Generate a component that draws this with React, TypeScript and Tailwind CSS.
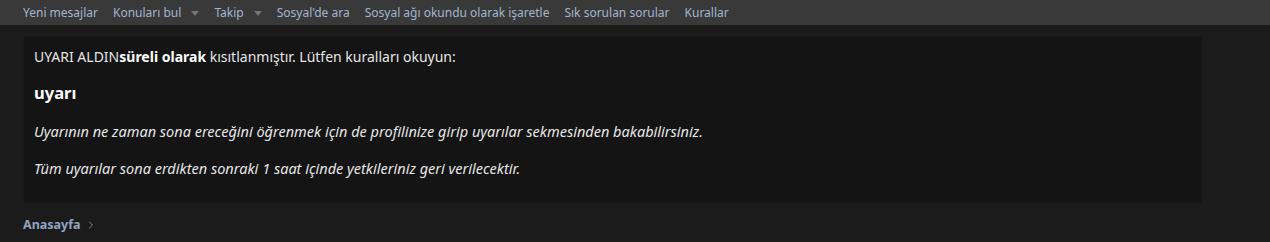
import { ChevronRight } from "lucide-react"

const navItems = [
  { label: "Yeni mesajlar" },
  { label: "Konuları bul", menu: true },
  { label: "Takip", menu: true },
  { label: "Sosyal'de ara" },
  { label: "Sosyal ağı okundu olarak işaretle" },
  { label: "Sık sorulan sorular" },
  { label: "Kurallar" },
]

function Caret() {
  return (
    <svg width="8" height="5" viewBox="0 0 8 5" className="ml-[10px] mt-[1px]">
      <path d="M0 0 H8 L4 5 Z" fill="#6f7680" />
    </svg>
  )
}

export default function App() {
  return (
    <div
      className="min-h-[242px] bg-[#1b1b1b] text-[#e6e6e6]"
      style={{ fontFamily: '"Noto Sans", "Open Sans", sans-serif' }}
    >
      {/* Sub navigation */}
      <nav className="h-[25px] bg-[#393939] flex items-center gap-[15px] px-[23px]">
        {navItems.map((item) => (
          <a
            key={item.label}
            href="#"
            className="flex items-center text-[12px] text-[#a3b5cf] leading-none"
          >
            {item.label}
            {item.menu && <Caret />}
          </a>
        ))}
      </nav>

      {/* Notice */}
      <div className="ml-[23px] mt-[11px] w-[1179px] h-[167px] bg-[#141414] border border-[#181818] px-[10px] pt-[8px]">
        <p className="text-[14px] leading-[24px]">
          UYARI ALDIN<b className="text-white">süreli olarak</b> kısıtlanmıştır. Lütfen kuralları okuyun:
        </p>
        <h3 className="mt-[12px] text-[16.5px] font-bold text-white leading-[24px]">uyarı</h3>
        <p className="mt-[15px] text-[14.5px] italic leading-[22px]">
          Uyarının ne zaman sona ereceğini öğrenmek için de profilinize girip uyarılar sekmesinden bakabilirsiniz.
        </p>
        <p className="mt-[15px] text-[14.5px] italic leading-[22px]">
          Tüm uyarılar sona erdikten sonraki 1 saat içinde yetkileriniz geri verilecektir.
        </p>
      </div>

      {/* Breadcrumb */}
      <div className="flex items-center gap-[4px] px-[23px] mt-[16px]">
        <a href="#" className="text-[12.5px] font-bold text-[#8fa5c3] leading-none">
          Anasayfa
        </a>
        <ChevronRight className="w-[12px] h-[12px] text-[#8a8a8a]" strokeWidth={2} />
      </div>
    </div>
  )
}
